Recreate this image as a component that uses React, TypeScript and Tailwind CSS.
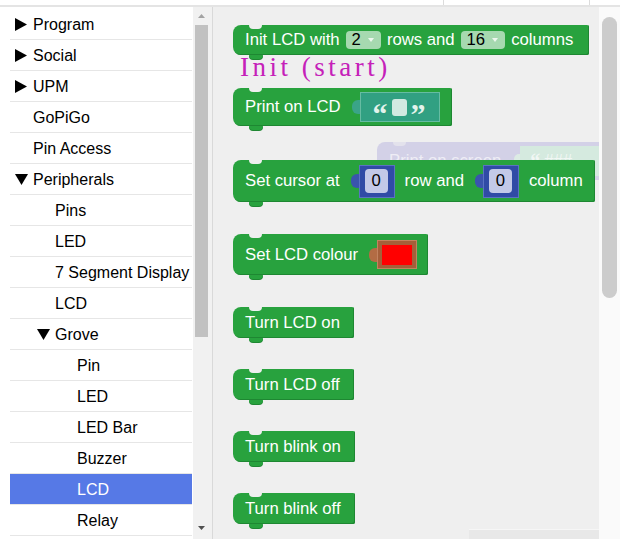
import React from "react";

type Row = { label: string; level: 0 | 1 | 2; arrow?: "right" | "down"; selected?: boolean };

const rows: Row[] = [
  { label: "Program", level: 0, arrow: "right" },
  { label: "Social", level: 0, arrow: "right" },
  { label: "UPM", level: 0, arrow: "right" },
  { label: "GoPiGo", level: 0 },
  { label: "Pin Access", level: 0 },
  { label: "Peripherals", level: 0, arrow: "down" },
  { label: "Pins", level: 1 },
  { label: "LED", level: 1 },
  { label: "7 Segment Display", level: 1 },
  { label: "LCD", level: 1 },
  { label: "Grove", level: 1, arrow: "down" },
  { label: "Pin", level: 2 },
  { label: "LED", level: 2 },
  { label: "LED Bar", level: 2 },
  { label: "Buzzer", level: 2 },
  { label: "LCD", level: 2, selected: true },
  { label: "Relay", level: 2 },
];

const indent = ["pl-[5px]", "pl-[27px]", "pl-[49px]"];

function Arrow({ dir }: { dir?: "right" | "down" }) {
  return (
    <span className="w-[12px] mr-[6px] flex items-center justify-start shrink-0">
      {dir === "right" && (
        <svg width="12" height="13" viewBox="0 0 12 13">
          <path d="M0 0 L12 6.5 L0 13 Z" fill="#000" />
        </svg>
      )}
      {dir === "down" && (
        <svg width="13" height="11" viewBox="0 0 13 11" className="overflow-visible">
          <path d="M0 0 H13 L6.5 11 Z" fill="#000" />
        </svg>
      )}
    </span>
  );
}

function Notch({ bg }: { bg: string }) {
  return <span className={`absolute top-0 left-[16px] w-[13px] h-[4px] rounded-b-[6px] ${bg}`} />;
}

function Block({ className, children }: { className: string; children: React.ReactNode }) {
  return (
    <div
      className={`relative flex items-center shrink-0 bg-[#28a23e] rounded-l-[8px] rounded-r-[2px] pl-[12px] text-white shadow-[inset_-1px_-1px_0_#1e8732] ${className}`}
    >
      <Notch bg="bg-[#efefef]" />
      <span className="absolute top-full left-[16px] w-[14px] h-[4px] rounded-b-[6px] bg-[#28a23e] shadow-[0_1px_0_#1e8732]" />
      {children}
    </div>
  );
}

function Dropdown({ value }: { value: string }) {
  return (
    <span className="flex items-center h-[18px] rounded-[4px] bg-[#a6d9b0] text-black pl-[6px] pr-[7px] gap-[7px] mx-[6px]">
      <span className="leading-none">{value}</span>
      <svg width="6" height="4" viewBox="0 0 6 4">
        <path d="M0 0 H6 L3 4 Z" fill="#eef7ef" />
      </svg>
    </span>
  );
}

function Tab({ color }: { color: string }) {
  return <span className={`w-[8px] h-[14px] rounded-l-[6px] shrink-0 ${color}`} />;
}

function NumberInput({ className }: { className: string }) {
  return (
    <span className={`flex items-center ${className}`}>
      <Tab color="bg-[#3a54ad]" />
      <span className="flex items-center w-[36px] h-[33px] bg-[#304ba6] border border-[#5a72c2] pl-[5px]">
        <span className="flex items-center justify-center w-[23px] h-[24px] rounded-[4px] bg-[#c3c9e8] text-black leading-none">
          0
        </span>
      </span>
    </span>
  );
}

export default function App() {
  return (
    <div className="w-[620px] h-[539px] overflow-hidden flex flex-col bg-white font-['Liberation_Sans',Arial,sans-serif]">
      {/* top strip */}
      <div className="h-[7px] shrink-0 bg-white border-b-2 border-[#e4e4e4] flex">
        <div className="ml-[443px] w-[147px] h-full border-x border-[#dcdcdc] bg-white" />
      </div>

      <div className="flex flex-1 min-h-0">
        {/* toolbox */}
        <div className="w-[193px] shrink-0 bg-white pt-[2px] overflow-hidden">
          {rows.map((r, i) => (
            <div
              key={i}
              className={`ml-[10px] w-[182px] h-[31px] border-b border-[#e6e6e6] flex items-center pt-[1px] text-[16px] whitespace-nowrap ${indent[r.level]} ${
                r.selected ? "bg-[#5679e6] text-white" : "text-black"
              }`}
            >
              <Arrow dir={r.arrow} />
              <span>{r.label}</span>
            </div>
          ))}
        </div>

        {/* toolbox scrollbar */}
        <div className="w-[20px] shrink-0 bg-[#f1f1f1] border-r border-[#d9d9d9] flex flex-col">
          <div className="h-[18px] flex items-center pl-[5px]">
            <svg width="7" height="4" viewBox="0 0 7 4">
              <path d="M0 4 L3.5 0 L7 4 Z" fill="#a3a3a3" />
            </svg>
          </div>
          <div className="ml-[2px] w-[13px] h-[312px] bg-[#c1c1c1]" />
          <div className="flex-1" />
          <div className="h-[16px] flex items-start pl-[5px] pt-[3px]">
            <svg width="7" height="4" viewBox="0 0 7 4">
              <path d="M0 0 H7 L3.5 4 Z" fill="#505050" />
            </svg>
          </div>
        </div>

        {/* workspace */}
        <div className="relative flex-1 overflow-hidden bg-[#efefef] pl-[20px] pt-[18px] flex flex-col items-start text-[16.7px]">
          {/* ghost block being dragged */}
          <div className="absolute left-[164px] top-[135px] w-[240px] h-[38px] rounded-l-[8px] bg-[#d3d1e7] flex items-center pl-[12px] text-[#eeedf5]">
            <Notch bg="bg-[#e3e2ec]" />
            <span>Print on screen</span>
            <span className="ml-[13px] w-[6px] h-[14px] rounded-l-[5px] bg-[#dcebe4]" />
            <span className="flex items-center h-[30px] w-[80px] bg-[#d5eadf] pl-[10px] gap-[4px] text-[#f1f7f4]">
              <span className="font-['Liberation_Serif',serif] font-bold text-[20px]">“</span>
              <span>###</span>
            </span>
          </div>

          {/* Init LCD */}
          <Block className="w-[356px] h-[30px]">
            <span>Init LCD with</span>
            <Dropdown value="2" />
            <span>rows and</span>
            <Dropdown value="16" />
            <span>columns</span>
          </Block>

          {/* Print on LCD */}
          <Block className="mt-[33px] w-[219px] h-[38px]">
            <span>Print on LCD</span>
            <span className="flex items-center ml-[11px]">
              <Tab color="bg-[#3aa488]" />
              <span className="flex items-center w-[80px] h-[30px] bg-[#31a082] border border-[#66bca2] pl-[12px] gap-[4px]">
                <span className="font-['Liberation_Serif',serif] font-bold text-[30px] leading-none text-[#e3f3ec] mt-[13px]">“</span>
                <span className="w-[15px] h-[17px] rounded-[3px] bg-[#d2e9e1]" />
                <span className="font-['Liberation_Serif',serif] font-bold text-[30px] leading-none text-[#e3f3ec] mt-[13px]">”</span>
              </span>
            </span>
          </Block>

          {/* Set cursor */}
          <Block className="mt-[34px] w-[362px] h-[42px]">
            <span>Set cursor at</span>
            <NumberInput className="ml-[11px]" />
            <span className="ml-[10px]">row and</span>
            <NumberInput className="ml-[11px]" />
            <span className="ml-[10px]">column</span>
          </Block>

          {/* Set LCD colour */}
          <Block className="mt-[32px] w-[195px] h-[41px]">
            <span>Set LCD colour</span>
            <span className="flex items-center ml-[11px]">
              <Tab color="bg-[#b36c44]" />
              <span className="flex items-center justify-center w-[40px] h-[29px] bg-[#a5603a] border border-[#c3835f]">
                <span className="w-[30px] h-[20px] bg-[#ff0000]" />
              </span>
            </span>
          </Block>

          <Block className="mt-[32px] w-[121px] h-[31px]">
            <span>Turn LCD on</span>
          </Block>
          <Block className="mt-[31px] w-[121px] h-[31px]">
            <span>Turn LCD off</span>
          </Block>
          <Block className="mt-[31px] w-[122px] h-[31px]">
            <span>Turn blink on</span>
          </Block>
          <Block className="mt-[31px] w-[122px] h-[31px]">
            <span>Turn blink off</span>
          </Block>

          {/* annotation */}
          <div className="absolute left-[27px] top-[47px] text-[27px] leading-none tracking-[3.5px] text-[#c520b9] font-['Liberation_Serif',serif] whitespace-nowrap">
            Init (start)
          </div>

          {/* horizontal scrollbar hint */}
          <div className="absolute left-[256px] right-0 bottom-0 h-[10px] bg-[#e8e8e8] border-t border-[#f6f6f6]" />
        </div>

        {/* right scrollbar gutter */}
        <div className="w-[21px] shrink-0 bg-[#fafafa] pt-[10px] pl-[3px]">
          <div className="w-[15px] h-[281px] rounded-full bg-[#cccccc]" />
        </div>
      </div>
    </div>
  );
}
